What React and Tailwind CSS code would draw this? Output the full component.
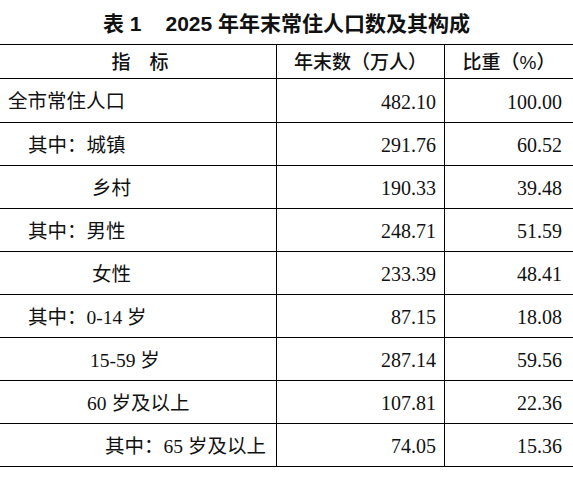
import React from 'react';

const rows = [
    { label: '全市常住人口', indent: 'pl-[8px]', count: '482.10', share: '100.00', h: 'h-[44px]' },
    { label: '其中：城镇', indent: 'pl-[28px]', count: '291.76', share: '60.52' },
    { label: '乡村', indent: 'pl-[92px]', count: '190.33', share: '39.48' },
    { label: '其中：男性', indent: 'pl-[28px]', count: '248.71', share: '51.59' },
    { label: '女性', indent: 'pl-[92px]', count: '233.39', share: '48.41' },
    { label: '其中：0-14 岁', indent: 'pl-[28px]', count: '87.15', share: '18.08' },
    { label: '15-59 岁', indent: 'pl-[90px]', count: '287.14', share: '59.56' },
    { label: '60 岁及以上', indent: 'pl-[87px]', count: '107.81', share: '22.36' },
    { label: '其中：65 岁及以上', indent: 'pl-[105px]', count: '74.05', share: '15.36' },
];

const cjkSerif = "font-['Liberation_Serif','Noto_Sans_CJK_SC',serif]";
const cjkSans = "font-['Liberation_Sans','Noto_Sans_CJK_SC',sans-serif]";

const App = () => {
    return (
        <div className="w-[573px] h-[486px] bg-white text-[#111]">
            {/* Title */}
            <div className={`h-[44px] flex items-center justify-center pt-[4px] text-[21px] font-bold ${cjkSans}`}>
                <span>表 1</span>
                <span className="ml-[24px]">2025 年年末常住人口数及其构成</span>
            </div>

            {/* Header */}
            <div className={`grid grid-cols-[277px_168px_1fr] h-[35px] border-y border-black text-[19px] font-medium ${cjkSans}`}>
                <div className="border-r border-black flex items-center justify-center pl-[4px] pt-[3px]">指　标</div>
                <div className="border-r border-black flex items-center justify-center pt-[3px]">年末数（万人）</div>
                <div className="flex items-center justify-center pt-[3px]">比重（%）</div>
            </div>

            {/* Body */}
            {rows.map((row) => (
                <div
                    key={row.label}
                    className={`grid grid-cols-[277px_168px_1fr] ${row.h || 'h-[43px]'} border-b border-black`}
                >
                    <div className={`border-r border-black flex items-center pt-[3px] text-[19.5px] ${row.indent} ${cjkSerif}`}>
                        {row.label}
                    </div>
                    <div className="border-r border-black flex items-center justify-end pr-[8px] pt-[2px] text-[20px] font-['Liberation_Serif',serif]">
                        {row.count}
                    </div>
                    <div className="flex items-center justify-end pr-[11px] pt-[2px] text-[20px] font-['Liberation_Serif',serif]">
                        {row.share}
                    </div>
                </div>
            ))}
        </div>
    );
};

export default App;
